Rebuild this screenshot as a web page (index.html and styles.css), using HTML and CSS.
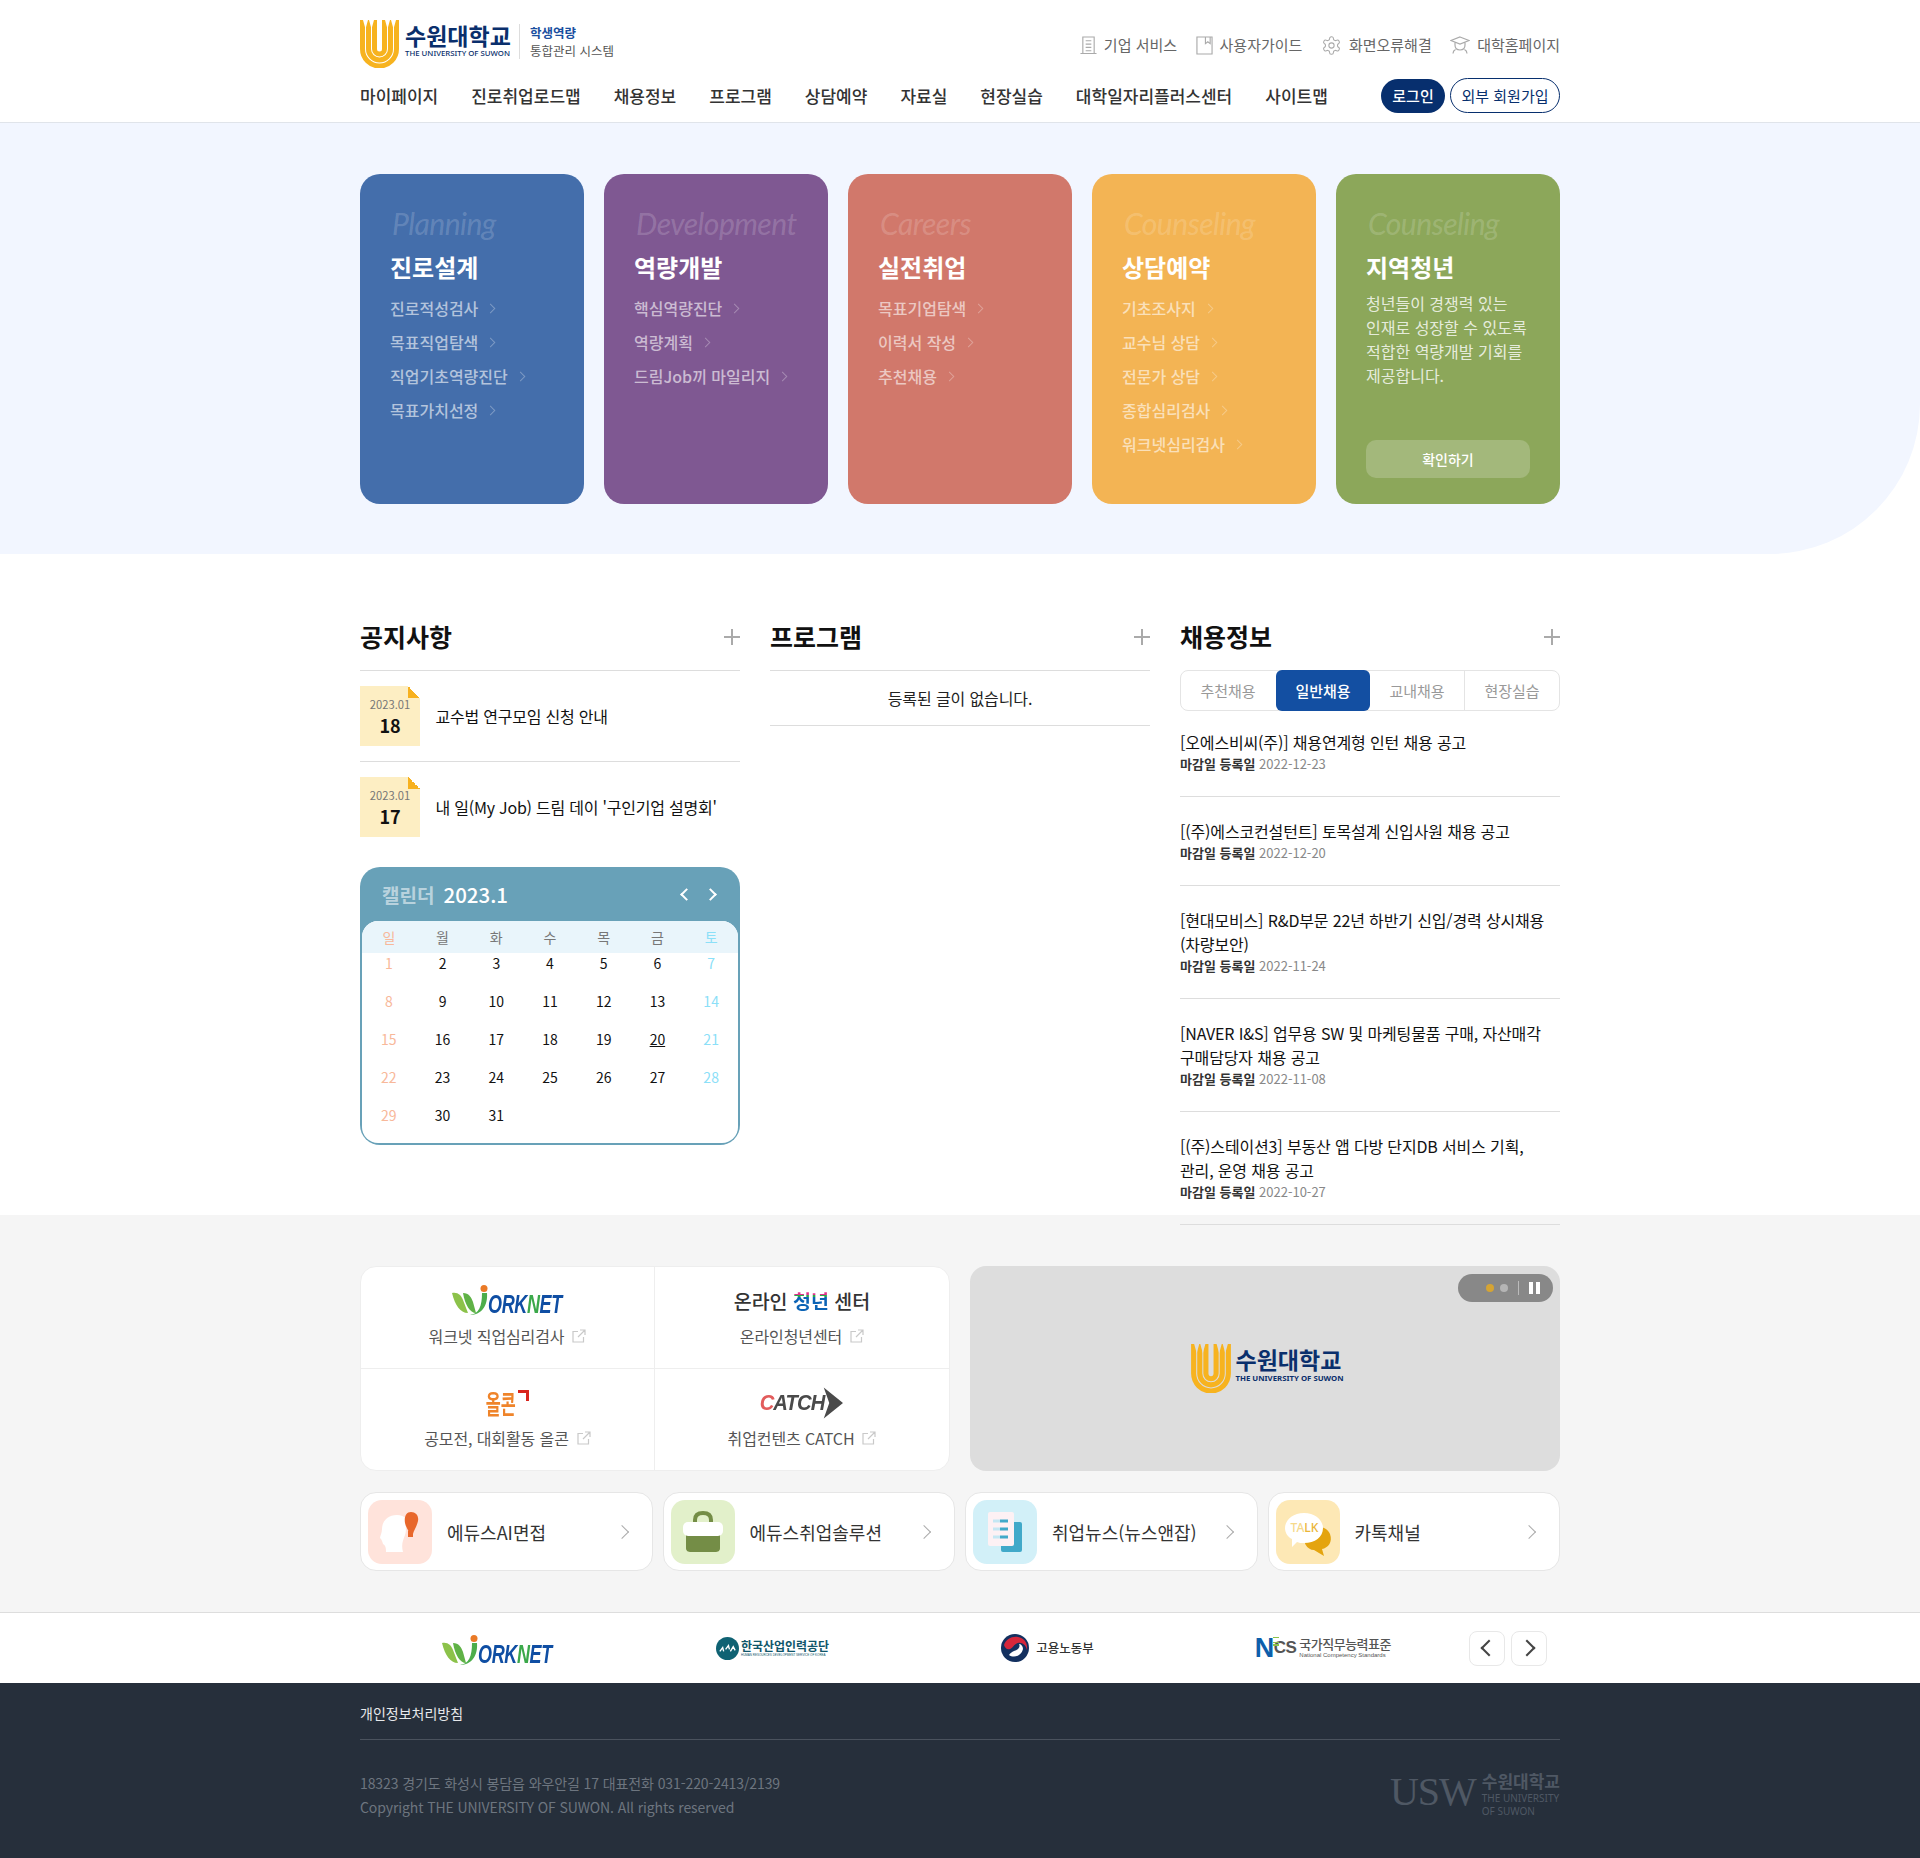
FILE: index.html
```html
<!DOCTYPE html>
<html lang="ko">
<head>
<meta charset="utf-8">
<title>수원대학교 학생역량 통합관리 시스템</title>
<link rel="stylesheet" href="styles.css">
</head>
<body>
<svg class="defs" width="0" height="0" aria-hidden="true">
  <symbol id="u-mark" viewBox="0 0 39 48">
    <g fill="none" stroke="#f7b31f" stroke-width="5">
      <path d="M2.500 0V29A17 17 0 0 0 36.500 29V0"/>
      <path d="M8.500 0V29A11 11 0 0 0 30.500 29V0"/>
      <path d="M14.500 0V29A5 5 0 0 0 24.500 29V0"/>
    </g>
    <path d="M3 0H8L5.500 9ZM9 0H14L11.500 9ZM25 0H30L27.500 9ZM31 0H36L33.500 9Z" fill="#fff"/>
  </symbol>
  <symbol id="u-mark-grey" viewBox="0 0 39 48">
    <g fill="none" stroke="#f7b31f" stroke-width="5">
      <path d="M2.500 0V29A17 17 0 0 0 36.500 29V0"/>
      <path d="M8.500 0V29A11 11 0 0 0 30.500 29V0"/>
      <path d="M14.500 0V29A5 5 0 0 0 24.500 29V0"/>
    </g>
    <path d="M3 0H8L5.500 9ZM9 0H14L11.500 9ZM25 0H30L27.500 9ZM31 0H36L33.500 9Z" fill="#ddd"/>
  </symbol>
  <symbol id="wn-mark" viewBox="0 0 40 30">
    <path d="M0 8C6 7 9 10 11 15L16 28C8 28 3 20 0 8Z" fill="#8cc24a"/>
    <path d="M11 8C17 8 19 12 21 17L24 28C18 28 13 20 11 8Z" fill="#5fb246"/>
    <path d="M18 30C27 29 30 21 30 8L35 8C36 20 30 30 18 30Z" fill="#4cad4b"/>
    <circle cx="32" cy="3.500" r="3.500" fill="#ea7a27"/>
  </symbol>
  <symbol id="ext" viewBox="0 0 14 14">
    <path d="M6 2.500H1V13H11.500V8M8 1H13V6M13 1L6 8" fill="none" stroke="#c9c9c9" stroke-width="1.200"/>
  </symbol>
</svg>

<header class="site-header">
  <div class="wrap">
    <div class="top-row">
      <a class="brand">
        <svg class="u-mark"><use href="#u-mark"/></svg>
        <span class="brand-name">
          <strong>수원대학교</strong>
          <small>THE UNIVERSITY OF SUWON</small>
        </span>
        <span class="brand-sub">
          <b>학생역량</b>
          <span>통합관리 시스템</span>
        </span>
      </a>
      <ul class="utils">
        <li>
          <svg class="ui" viewBox="0 0 18 20"><path d="M3 18.500V1H15V18.500M0.500 18.500H17.500M6 5H12M6 8.500H12M6 12H12M6 15.500H12" fill="none" stroke="#aaa" stroke-width="1.200"/></svg>
          기업 서비스
        </li>
        <li>
          <svg class="ui" viewBox="0 0 18 20"><path d="M1 1H17V19H1ZM10 1V8L12.500 6L15 8V1" fill="none" stroke="#aaa" stroke-width="1.200"/></svg>
          사용자가이드
        </li>
        <li>
          <svg class="ui gear" viewBox="0 0 24 24"><path d="M12.220 2h-.44a2 2 0 0 0-2 2v.18a2 2 0 0 1-1 1.730l-.43.25a2 2 0 0 1-2 0l-.15-.08a2 2 0 0 0-2.730.73l-.22.38a2 2 0 0 0 .73 2.730l.15.1a2 2 0 0 1 1 1.720v.51a2 2 0 0 1-1 1.740l-.15.09a2 2 0 0 0-.73 2.730l.22.38a2 2 0 0 0 2.730.73l.15-.08a2 2 0 0 1 2 0l.43.25a2 2 0 0 1 1 1.730V20a2 2 0 0 0 2 2h.44a2 2 0 0 0 2-2v-.18a2 2 0 0 1 1-1.730l.43-.25a2 2 0 0 1 2 0l.15.08a2 2 0 0 0 2.730-.73l.22-.39a2 2 0 0 0-.73-2.730l-.15-.08a2 2 0 0 1-1-1.740v-.5a2 2 0 0 1 1-1.740l.15-.09a2 2 0 0 0 .73-2.730l-.22-.38a2 2 0 0 0-2.730-.73l-.15.08a2 2 0 0 1-2 0l-.43-.25a2 2 0 0 1-1-1.730V4a2 2 0 0 0-2-2z" fill="none" stroke="#aaa" stroke-width="1.200"/><circle cx="12" cy="12" r="3" fill="none" stroke="#aaa" stroke-width="1.200"/></svg>
          화면오류해결
        </li>
        <li>
          <svg class="ui cap" viewBox="0 0 20 18"><path d="M10 1L19 4.500L10 8L1 4.500ZM5 6.500V9C5 12 7 14 10 14S15 12 15 9V6.500M5.500 13.500C3.500 14.500 3 15.800 3 17.500M14.500 13.500C16.500 14.500 17 15.800 17 17.500" fill="none" stroke="#aaa" stroke-width="1.200"/></svg>
          대학홈페이지
        </li>
      </ul>
    </div>
    <nav class="main-nav">
      <a>마이페이지</a>
      <a>진로취업로드맵</a>
      <a>채용정보</a>
      <a>프로그램</a>
      <a>상담예약</a>
      <a>자료실</a>
      <a>현장실습</a>
      <a>대학일자리플러스센터</a>
      <a>사이트맵</a>
      <span class="auth">
        <a class="btn-login">로그인</a>
        <a class="btn-join">외부 회원가입</a>
      </span>
    </nav>
  </div>
</header>

<section class="hero">
  <div class="wrap cards">
    <article class="card blue">
      <p class="script">Planning</p>
      <h2>진로설계</h2>
      <ul>
        <li>진로적성검사<i class="chev"></i></li>
        <li>목표직업탐색<i class="chev"></i></li>
        <li>직업기초역량진단<i class="chev"></i></li>
        <li>목표가치선정<i class="chev"></i></li>
      </ul>
    </article>
    <article class="card purple">
      <p class="script">Development</p>
      <h2>역량개발</h2>
      <ul>
        <li>핵심역량진단<i class="chev"></i></li>
        <li>역량계획<i class="chev"></i></li>
        <li>드림Job끼 마일리지<i class="chev"></i></li>
      </ul>
    </article>
    <article class="card red">
      <p class="script">Careers</p>
      <h2>실전취업</h2>
      <ul>
        <li>목표기업탐색<i class="chev"></i></li>
        <li>이력서 작성<i class="chev"></i></li>
        <li>추천채용<i class="chev"></i></li>
      </ul>
    </article>
    <article class="card orange">
      <p class="script">Counseling</p>
      <h2>상담예약</h2>
      <ul>
        <li>기초조사지<i class="chev"></i></li>
        <li>교수님 상담<i class="chev"></i></li>
        <li>전문가 상담<i class="chev"></i></li>
        <li>종합심리검사<i class="chev"></i></li>
        <li>워크넷심리검사<i class="chev"></i></li>
      </ul>
    </article>
    <article class="card green">
      <p class="script">Counseling</p>
      <h2>지역청년</h2>
      <p class="card-text">청년들이 경쟁력 있는<br>인재로 성장할 수 있도록<br>적합한 역량개발 기회를<br>제공합니다.</p>
      <a class="card-btn">확인하기</a>
    </article>
  </div>
</section>

<section class="board">
  <div class="wrap board-grid">
    <div class="col">
      <div class="col-head"><h3>공지사항</h3><i class="plus"></i></div>
      <ul class="notice">
        <li>
          <div class="date"><span>2023.01</span><b>18</b></div>
          <p>교수법 연구모임 신청 안내</p>
        </li>
        <li>
          <div class="date"><span>2023.01</span><b>17</b></div>
          <p>내 일(My Job) 드림 데이 '구인기업 설명회'</p>
        </li>
      </ul>
      <div class="calendar">
        <div class="cal-head">
          <span class="cal-label">캘린더</span>
          <span class="cal-month">2023.1</span>
          <i class="cal-arrow prev"></i>
          <i class="cal-arrow next"></i>
        </div>
        <div class="cal-body">
          <div class="cal-week">
            <span class="sun">일</span><span>월</span><span>화</span><span>수</span><span>목</span><span>금</span><span class="sat">토</span>
          </div>
          <div class="cal-days">
            <span class="sun">1</span><span>2</span><span>3</span><span>4</span><span>5</span><span>6</span><span class="sat">7</span>
            <span class="sun">8</span><span>9</span><span>10</span><span>11</span><span>12</span><span>13</span><span class="sat">14</span>
            <span class="sun">15</span><span>16</span><span>17</span><span>18</span><span>19</span><span><u>20</u></span><span class="sat">21</span>
            <span class="sun">22</span><span>23</span><span>24</span><span>25</span><span>26</span><span>27</span><span class="sat">28</span>
            <span class="sun">29</span><span>30</span><span>31</span>
          </div>
        </div>
      </div>
    </div>

    <div class="col">
      <div class="col-head"><h3>프로그램</h3><i class="plus"></i></div>
      <p class="empty">등록된 글이 없습니다.</p>
    </div>

    <div class="col">
      <div class="col-head"><h3>채용정보</h3><i class="plus"></i></div>
      <div class="tabs">
        <a>추천채용</a>
        <a class="on">일반채용</a>
        <a>교내채용</a>
        <a>현장실습</a>
      </div>
      <ul class="jobs">
        <li>
          <p>[오에스비씨(주)] 채용연계형 인턴 채용 공고</p>
          <div class="meta"><b>마감일 등록일</b> 2022-12-23</div>
        </li>
        <li>
          <p>[(주)에스코컨설턴트] 토목설계 신입사원 채용 공고</p>
          <div class="meta"><b>마감일 등록일</b> 2022-12-20</div>
        </li>
        <li>
          <p>[현대모비스] R&amp;D부문 22년 하반기 신입/경력 상시채용 (차량보안)</p>
          <div class="meta"><b>마감일 등록일</b> 2022-11-24</div>
        </li>
        <li>
          <p>[NAVER I&amp;S] 업무용 SW 및 마케팅물품 구매, 자산매각 구매담당자 채용 공고</p>
          <div class="meta"><b>마감일 등록일</b> 2022-11-08</div>
        </li>
        <li>
          <p>[(주)스테이션3] 부동산 앱 다방 단지DB 서비스 기획, 관리, 운영 채용 공고</p>
          <div class="meta"><b>마감일 등록일</b> 2022-10-27</div>
        </li>
      </ul>
    </div>
  </div>
</section>

<section class="services">
  <div class="wrap">
    <div class="svc-top">
      <div class="link-box">
        <a class="link-cell">
          <span class="logo-slot">
            <span class="worknet"><svg class="wn-mark"><use href="#wn-mark"/></svg><span class="wn-text">ORK<em>N</em>ET</span></span>
          </span>
          <span class="cap-line">워크넷 직업심리검사<svg class="ext"><use href="#ext"/></svg></span>
        </a>
        <a class="link-cell">
          <span class="logo-slot"><span class="online">온라인 <b>청년</b> 센터</span></span>
          <span class="cap-line">온라인청년센터<svg class="ext"><use href="#ext"/></svg></span>
        </a>
        <a class="link-cell">
          <span class="logo-slot"><span class="allcon">올콘</span><i class="allcon-mark"></i></span>
          <span class="cap-line">공모전, 대회활동 올콘<svg class="ext"><use href="#ext"/></svg></span>
        </a>
        <a class="link-cell">
          <span class="logo-slot">
            <span class="catch"><em>C</em>ATCH</span>
            <svg class="catch-arrow" viewBox="0 0 24 34"><path d="M3 0L24 17L3 34L9 17Z" fill="#4a4a4a"/></svg>
          </span>
          <span class="cap-line">취업컨텐츠 CATCH<svg class="ext"><use href="#ext"/></svg></span>
        </a>
      </div>
      <div class="banner">
        <div class="banner-ctrl">
          <i class="dot gold"></i><i class="dot"></i><i class="sep"></i><i class="pause"></i>
        </div>
        <div class="banner-logo">
          <svg class="u-mark big"><use href="#u-mark-grey"/></svg>
          <span class="brand-name big">
            <strong>수원대학교</strong>
            <small>THE UNIVERSITY OF SUWON</small>
          </span>
        </div>
      </div>
    </div>

    <div class="quick">
      <a class="quick-item">
        <span class="tile t-peach">
          <svg viewBox="0 0 64 64"><path d="M30 52H18C18 47 17 45 15 44C14 41 14 40 12 38C12 36 14 33 14 29C14 21 20 15 29 15C33 15 36 16 38 19C37 25 39 30 37 35C35 40 33 45 35 52Z" fill="#fff"/><path d="M43 12C48 12 51 16 50 21C49 26 46 30 45 34H41C41 30 38 28 37 23C36 17 38 12 43 12Z" fill="#e8672b"/><rect x="40" y="31" width="5" height="6" fill="#e8672b"/></svg>
        </span>
        <span class="q-text">에듀스AI면접</span><i class="q-chev"></i>
      </a>
      <a class="quick-item">
        <span class="tile t-lime">
          <svg viewBox="0 0 64 64"><path d="M24 24V20C24 15 27 13 32 13S40 15 40 20V24" fill="none" stroke="#748d46" stroke-width="4"/><path d="M15 34H49V48C49 51 47 52 44 52H20C17 52 15 51 15 48Z" fill="#748d46"/><rect x="12" y="22" width="40" height="14" rx="5" fill="#fff"/></svg>
        </span>
        <span class="q-text">에듀스취업솔루션</span><i class="q-chev"></i>
      </a>
      <a class="quick-item">
        <span class="tile t-sky">
          <svg viewBox="0 0 64 64"><rect x="28" y="22" width="21" height="30" rx="2" fill="#41a9c9"/><rect x="15" y="12" width="26" height="34" rx="2" fill="#fdf1f4"/><path d="M20 21H27M20 29H27M20 37H27" stroke="#c5e7f3" stroke-width="3"/><path d="M27 29H35M27 37H35M27 21H35" stroke="#41a9c9" stroke-width="3"/></svg>
        </span>
        <span class="q-text">취업뉴스(뉴스앤잡)</span><i class="q-chev"></i>
      </a>
      <a class="quick-item">
        <span class="tile t-sand">
          <svg class="talk-bubble" viewBox="0 0 64 64"><path d="M28 31C38 25 50 25 54 34C57 42 52 48 46 49L48 56L38 50C31 50 26 42 28 31Z" fill="#e4a40f"/><path d="M28 13C39 13 47 20 47 28C47 37 39 43 28 43C25 43 23 43 21 42L16 47L16 39C12 37 9 33 9 28C9 20 17 13 28 13Z" fill="#fff"/></svg>
          <span class="talk-label">TA<em>LK</em></span>
        </span>
        <span class="q-text">카톡채널</span><i class="q-chev"></i>
      </a>
    </div>
  </div>
</section>

<section class="partners">
  <div class="wrap partner-row">
    <div class="partner">
      <span class="worknet small"><svg class="wn-mark"><use href="#wn-mark"/></svg><span class="wn-text">ORK<em>N</em>ET</span></span>
    </div>
    <div class="partner">
      <svg class="hrd-mark" viewBox="0 0 24 24"><circle cx="12" cy="12" r="12" fill="#0f6273"/><path d="M4 15L7 11L8 15M10 13L13 9L14 13M15 15L18 10L20 14" fill="none" stroke="#fff" stroke-width="1.400"/></svg>
      <span class="hrd"><b>한국산업인력공단</b><small>HUMAN RESOURCES DEVELOPMENT SERVICE OF KOREA</small></span>
    </div>
    <div class="partner">
      <svg class="moel-mark" viewBox="0 0 28 28"><circle cx="14" cy="14" r="14" fill="#13305f"/><path d="M3 11C5 5 11 2 17 3C23 4 27 9 26 16C25 11 21 8 17 9C13 10 12 14 9 15C6 16 4 14 3 11Z" fill="#d6273b"/><path d="M8 21C12 24 20 23 22 15C22 12 20 10 18 10C20 14 16 16 13 17C11 18 9 19 8 21Z" fill="#fff"/></svg>
      <span class="moel">고용노동부</span>
    </div>
    <div class="partner">
      <span class="ncs"><em>N</em><i class="ncs-bars"></i>CS</span>
      <span class="ncs-text"><b>국가직무능력표준</b><small>National Competency Standards</small></span>
    </div>
    <div class="pager">
      <a class="pg prev"></a>
      <a class="pg next"></a>
    </div>
  </div>
</section>

<footer class="footer">
  <div class="wrap">
    <div class="foot-top">개인정보처리방침</div>
    <div class="foot-bottom">
      <div class="foot-info">
        <p>18323 경기도 화성시 봉담읍 와우안길 17 대표전화 031-220-2413/2139</p>
        <p>Copyright THE UNIVERSITY OF SUWON. All rights reserved</p>
      </div>
      <div class="foot-logo">
        <span class="usw">USW</span>
        <span class="usw-side"><b>수원대학교</b><small>THE UNIVERSITY</small><small>OF SUWON</small></span>
      </div>
    </div>
  </div>
</footer>
</body>
</html>
```

FILE: styles.css
```css
* { box-sizing: border-box; }
html, body { margin: 0; padding: 0; }
body {
  font-family: "Noto Sans CJK KR", "Noto Sans", sans-serif;
  color: #222;
  background: #fff;
  font-size: 16px;
}
ul { list-style: none; margin: 0; padding: 0; }
p, h2, h3 { margin: 0; }
i, em { font-style: normal; }
.defs { position: absolute; }
.wrap { width: 1200px; margin: 0 auto; }

/* header */
.site-header { height: 123px; padding-top: 20px; border-bottom: 1px solid #e0e4ea; background: #fff; }
.top-row { display: flex; justify-content: space-between; align-items: center; height: 48px; }
.brand { display: flex; align-items: flex-start; }
.u-mark { width: 39px; height: 48px; display: block; }
.brand-name { display: flex; flex-direction: column; margin-left: 6px; margin-top: 3px; width: 105px; }
.brand-name strong { font-size: 23px; line-height: 24px; font-weight: 700; color: #0a2f6c; white-space: nowrap; }
.brand-name small { font-size: 7.800px; line-height: 10px; margin-top: 1px; font-weight: 500; color: #0a2f6c; white-space: nowrap; font-family: "Noto Sans", sans-serif; }
.brand-sub { display: flex; flex-direction: column; margin-left: 9px; margin-top: 4px; padding-left: 10px; border-left: 1px solid #ddd; font-size: 12.500px; line-height: 17.500px; color: #555; }
.brand-sub b { color: #1a4f9f; font-weight: 700; font-size: 12.500px; }
.utils { display: flex; align-items: center; font-size: 15px; line-height: 22px; color: #666; gap: 18.500px; padding-top: 2px; }
.utils li { display: flex; align-items: center; gap: 7px; }
.ui { width: 17px; height: 19px; display: block; }
.ui.gear { width: 21px; height: 21px; }
.ui.cap { width: 20px; height: 18px; }

.main-nav { display: flex; align-items: center; gap: 33px; height: 34px; margin-top: 11px; font-size: 17px; font-weight: 500; color: #333; }
.main-nav > a { margin-top: -2px; }
.auth { display: flex; gap: 5px; margin-left: auto; font-size: 15px; }
.btn-login { width: 64px; height: 34px; border-radius: 17px; background: #072f6e; color: #fff; text-align: center; line-height: 33px; font-weight: 500; }
.btn-join { width: 110px; height: 35px; margin-top: -1px; border: 1px solid #072f6e; border-radius: 18px; color: #072f6e; text-align: center; line-height: 33px; font-weight: 400; background: #fff; }

/* hero */
.hero { height: 431px; padding-top: 51px; background: #f2f6ff; border-bottom-right-radius: 150px; }
.cards { display: flex; gap: 20px; }
.card { width: 224px; height: 330px; padding: 29px 30px 26px; border-radius: 20px; color: #fff; display: flex; flex-direction: column; }
.card.blue { background: #446eab; }
.card.purple { background: #7f5892; }
.card.red { background: #d1786b; }
.card.orange { background: #f3b454; }
.card.green { background: #8ca75a; }
.script { font-family: "Lato", sans-serif; font-style: italic; font-weight: 400; font-size: 30px; line-height: 40px; margin-left: 2px; letter-spacing: -.5px; color: rgba(255,255,255,.18); white-space: nowrap; }
.card h2 { font-size: 24px; line-height: 36px; font-weight: 700; margin-top: 6px; margin-bottom: 6px; color: #fff; }
.card li { font-size: 16px; line-height: 34px; height: 34px; font-weight: 500; color: rgba(255,255,255,.6); white-space: nowrap; display: flex; align-items: center; }
.chev { width: 7px; height: 7px; border-top: 1.400px solid rgba(255,255,255,.3); border-right: 1.400px solid rgba(255,255,255,.3); transform: rotate(45deg); margin-left: 9px; }
.card-text { font-size: 16px; line-height: 24px; color: rgba(255,255,255,.8); }
.card-btn { margin-top: auto; height: 38px; border-radius: 10px; background: rgba(255,255,255,.2); text-align: center; font-size: 14px; line-height: 38px; font-weight: 500; color: #fff; }

/* board */
.board { height: 661px; padding-top: 64px; position: relative; z-index: 1; }
.board-grid { display: flex; gap: 30px; }
.col { width: 380px; }
.col-head { display: flex; justify-content: space-between; height: 52px; }
.col-head h3 { font-size: 25px; line-height: 36px; font-weight: 700; color: #111; }
.plus { width: 16px; height: 16px; margin-top: 11px; background: linear-gradient(#aaa,#aaa) center/16px 2px no-repeat, linear-gradient(#aaa,#aaa) center/2px 16px no-repeat; }

.notice { border-top: 1px solid #ddd; }
.notice li { display: flex; align-items: center; padding: 15px 0; }
.notice li + li { border-top: 1px solid #ddd; }
.date { width: 60px; height: 60px; background: #fdeec3; position: relative; display: flex; flex-direction: column; align-items: center; padding-top: 10px; flex: none; }
.date::after { content: ""; position: absolute; top: 0; right: 0; width: 12px; height: 12px; background: linear-gradient(45deg, #f7b11f 50%, #fff 50%); }
.date span { font-size: 11.200px; line-height: 16px; color: #777; }
.date b { font-size: 18px; line-height: 26px; font-weight: 700; color: #111; }
.notice p { margin-left: 15.500px; font-size: 16px; line-height: 24px; color: #111; white-space: nowrap; letter-spacing: -.22px; }

.calendar { margin-top: 15px; height: 278px; background: #68a1b8; border-radius: 20px; padding: 0 2px 2px; display: flex; flex-direction: column; }
.cal-head { height: 54px; flex: none; display: flex; align-items: center; padding-left: 20px; }
.cal-label { font-size: 19px; font-weight: 700; color: rgba(255,255,255,.55); }
.cal-month { font-size: 20.500px; font-weight: 500; color: #fff; margin-left: 9px; }
.cal-arrow { width: 9px; height: 9px; border-top: 2px solid #fff; border-right: 2px solid #fff; }
.cal-arrow.prev { transform: rotate(-135deg); margin-left: auto; }
.cal-arrow.next { transform: rotate(45deg); margin-left: 15px; margin-right: 23px; }
.cal-body { flex: 1; background: #fff; border-radius: 16px; overflow: hidden; }
.cal-week { display: grid; grid-template-columns: repeat(7, 1fr); height: 32px; background: #e9f5fb; font-size: 14px; line-height: 32px; text-align: center; color: #777; }
.cal-days { display: grid; grid-template-columns: repeat(7, 1fr); grid-auto-rows: 38px; font-size: 14px; line-height: 20px; text-align: center; color: #111; }
.sun { color: #f8b89a; }
.sat { color: #8be0f8; }

.empty { border-top: 1px solid #ddd; border-bottom: 1px solid #ddd; height: 56px; line-height: 55px; text-align: center; font-size: 16px; color: #222; letter-spacing: -.1px; }

.tabs { display: flex; height: 41px; border: 1px solid #e4e4e4; border-radius: 8px; font-size: 15px; line-height: 40px; color: #999; }
.tabs a { flex: 1; text-align: center; }
.tabs a + a { border-left: 1px solid #e4e4e4; }
.tabs a.on { background: #134fa2; color: #fff; font-weight: 500; border-radius: 6px; border-left: 0; margin: -1px 0 -1px 1px; line-height: 41px; }
.tabs a.on + a { border-left: 0; }
.jobs li { padding: 22px 0 23px; border-bottom: 1px solid #ddd; }
.jobs li:first-child { padding-top: 19px; }
.jobs p { font-size: 16px; line-height: 24px; padding-bottom: 1px; color: #111; word-break: keep-all; letter-spacing: -.15px; }
.meta { font-size: 13px; line-height: 18px; color: #888; }
.meta b { color: #333; font-weight: 700; }

/* services */
.services { height: 398px; padding-top: 51px; background: #f5f5f5; border-bottom: 1px solid #ddd; }
.svc-top { display: flex; justify-content: space-between; }
.link-box { width: 590px; height: 205px; display: grid; grid-template-columns: 1fr 1fr; grid-template-rows: 1fr 1fr; background: #fff; border: 1px solid #eee; border-radius: 16px; }
.link-cell { display: flex; flex-direction: column; align-items: center; padding-top: 17px; }
.link-cell:nth-child(odd) { border-right: 1px solid #eee; }
.link-cell:nth-child(-n+2) { border-bottom: 1px solid #eee; padding-top: 16px; }
.logo-slot { height: 34px; display: flex; align-items: center; justify-content: center; }
.cap-line { display: flex; align-items: center; margin-top: 6.500px; font-size: 16px; line-height: 24px; color: #555; letter-spacing: -.1px; }
.ext { width: 14px; height: 14px; margin-left: 8px; }

.worknet { display: flex; align-items: flex-end; width: 112px; height: 30px; flex: none; }
.wn-mark { width: 40px; height: 30px; flex: none; }
.wn-text { font-family: "Liberation Sans", sans-serif; font-style: italic; font-weight: 700; font-size: 25px; line-height: 22px; color: #0f4ea3; letter-spacing: -.5px; display: inline-block; transform: scaleX(.72); transform-origin: left bottom; margin-left: -4px; white-space: nowrap; }
.wn-text em { color: #3ba84a; font-style: italic; }
.online { font-size: 19.500px; font-weight: 500; color: #333; white-space: nowrap; }
.online b { font-weight: 700; color: transparent; background: linear-gradient(#e0338b 0 30%, #28a84a 30% 38%, #0b63b5 38%); -webkit-background-clip: text; background-clip: text; }
.allcon { font-size: 16px; line-height: 20px; font-weight: 700; color: #ef842a; display: inline-block; transform: scale(1.02, 1.6); }
.allcon-mark { width: 11px; height: 11px; margin-left: 3px; margin-top: -14px; border-top: 3px solid #d9251d; border-right: 3px solid #d9251d; }
.catch { font-family: "Liberation Sans", sans-serif; font-style: italic; font-weight: 700; font-size: 22px; color: #4a4a4a; letter-spacing: -1px; white-space: nowrap; display: inline-block; transform: scaleX(.92); transform-origin: right center; }
.catch em { color: #e25c5c; font-style: italic; }
.catch-arrow { width: 22px; height: 32px; margin-left: -3px; margin-right: 7px; }

.banner { width: 590px; height: 205px; background: #ddd; border-radius: 16px; padding: 8px 7px 8px 8px; display: flex; flex-direction: column; align-items: flex-end; }
.banner-ctrl { width: 95px; height: 28px; border-radius: 14px; background: #888; display: flex; align-items: center; padding-left: 28px; flex: none; }
.dot { width: 8px; height: 8px; border-radius: 50%; background: #b5b5b5; margin-right: 6px; }
.dot.gold { background: #d5a434; }
.sep { width: 1px; height: 14px; background: #bbb; margin-left: 4px; margin-right: 10px; }
.pause { width: 11px; height: 12px; border-left: 4px solid #fff; border-right: 4px solid #fff; }
.banner-logo { display: flex; align-items: flex-start; align-self: center; margin-top: 42px; width: 150px; }
.u-mark.big { width: 40px; height: 49px; flex: none; }
.brand-name.big { margin-left: 5px; width: 105px; margin-top: 3px; }
.brand-name.big small { margin-top: 2px; font-weight: 700; }

.quick { display: flex; justify-content: space-between; margin-top: 21px; }
.quick-item { width: 292.500px; height: 79px; background: #fff; border: 1px solid #e6e6e6; border-radius: 16px; padding: 0 25px 0 7px; display: flex; align-items: center; }
.tile { width: 64px; height: 64px; border-radius: 14px; flex: none; position: relative; display: block; }
.tile svg { width: 64px; height: 64px; display: block; }
.t-peach { background: #ffe3db; }
.t-lime { background: #e2f0ca; }
.t-sky { background: #d2f0f8; }
.t-sand { background: #fde8b5; }
.talk-label { position: absolute; left: 15px; top: 21px; font-size: 12px; line-height: 14px; font-weight: 500; color: #f6d98a; font-family: "Noto Sans", sans-serif; }
.talk-label em { color: #eab538; }
.q-text { margin-left: 15px; font-size: 18px; line-height: 26px; color: #333; white-space: nowrap; }
.q-chev { width: 10px; height: 10px; margin-left: auto; border-top: 1.600px solid #aaa; border-right: 1.600px solid #aaa; transform: rotate(45deg); }

/* partners */
.partners { height: 70px; background: #fff; }
.partner-row { display: flex; align-items: center; height: 100%; }
.partner { width: 275px; display: flex; align-items: center; justify-content: center; flex: none; }
.worknet.small { margin-top: 4px; }
.hrd-mark { width: 23px; height: 23px; margin-right: 2px; flex: none; }
.hrd { display: flex; flex-direction: column; width: 88px; color: #10566a; }
.hrd b { font-size: 12px; line-height: 15px; font-weight: 700; white-space: nowrap; letter-spacing: -.05px; }
.hrd small { font-size: 3px; line-height: 5px; white-space: nowrap; font-family: "Liberation Sans", sans-serif; }
.moel-mark { width: 28px; height: 28px; margin-right: 7px; }
.moel { font-size: 12.500px; line-height: 18px; color: #333; font-weight: 500; }
.ncs { font-family: "Liberation Sans", sans-serif; font-size: 17px; line-height: 24px; font-weight: 700; color: #555; letter-spacing: -.5px; display: flex; align-items: flex-end; position: relative; }
.ncs em { color: #0d5fab; font-size: 27px; line-height: 24px; }
.ncs-bars { position: absolute; left: 18px; top: 1px; width: 6px; height: 9px; background: repeating-linear-gradient(#8cc24a 0 1px, transparent 1px 2.500px); }
.ncs-text { display: flex; flex-direction: column; margin-left: 3px; color: #555; width: 91px; }
.ncs-text b { font-size: 13px; line-height: 14px; font-weight: 500; white-space: nowrap; letter-spacing: -.5px; }
.ncs-text small { font-size: 6px; line-height: 8px; white-space: nowrap; font-family: "Liberation Sans", sans-serif; }
.pager { display: flex; gap: 6px; margin-left: 9px; }
.pg { width: 36px; height: 35px; background: #fff; border: 1px solid #e8e8e8; border-radius: 8px; display: flex; align-items: center; justify-content: center; }
.pg::before { content: ""; width: 10px; height: 10px; border-top: 2px solid #444; border-right: 2px solid #444; }
.pg.prev::before { transform: rotate(-135deg); margin-left: 4px; }
.pg.next::before { transform: rotate(45deg); margin-right: 4px; }

/* footer */
.footer { height: 175px; background: #262f3b; }
.foot-top { height: 57px; padding-top: 19px; font-size: 14px; line-height: 22px; color: #e6e8ea; border-bottom: 1px solid #4a525d; }
.foot-bottom { display: flex; justify-content: space-between; padding-top: 31px; }
.foot-info p { font-size: 14px; line-height: 24px; color: #6d757f; white-space: nowrap; letter-spacing: -.1px; }
.foot-logo { display: flex; align-items: flex-start; color: #4f5864; }
.usw { font-family: "Liberation Serif", serif; font-size: 40px; line-height: 42px; letter-spacing: -1px; }
.usw-side { display: flex; flex-direction: column; margin-left: 6px; margin-top: -1px; }
.usw-side b { font-size: 17px; line-height: 22px; font-weight: 700; white-space: nowrap; }
.usw-side small { font-size: 10px; line-height: 13px; white-space: nowrap; font-family: "Noto Sans", sans-serif; }
```
